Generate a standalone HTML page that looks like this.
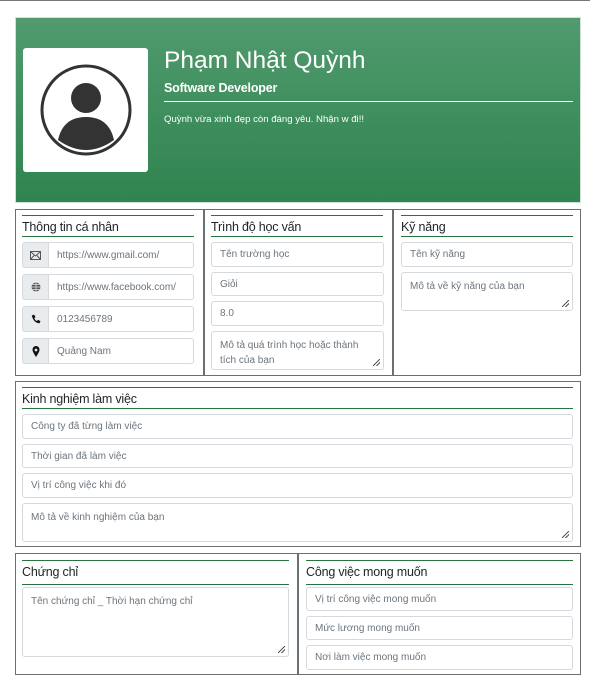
<!DOCTYPE html>
<html><head><meta charset="utf-8">
<style>
*{box-sizing:border-box;margin:0;padding:0}
body{width:590px;height:690px;background:#fff;position:relative;font-family:"Liberation Sans","DejaVu Sans",sans-serif;overflow:hidden}
.a{position:absolute}
.top{left:0;top:0;width:590px;height:1px;background:#777}
.hdr{left:15px;top:17px;width:566px;height:186px;background:linear-gradient(#519a6e,#2f844f);border:1px solid #cfe3d6}
.av{left:23px;top:48px;width:125px;height:124px;background:#fff;border-radius:3px}
.name{left:164px;top:47px;color:#fff;font-size:24.5px;letter-spacing:0}
.role{left:164px;top:81px;color:#fff;font-size:12.5px;font-weight:bold;letter-spacing:-0.2px}
.hl{left:164px;top:101px;width:409px;height:1px;background:#fff}
.bio{left:164px;top:114px;color:#fff;font-size:9.6px}
.box{border:1px solid #6a6f74}
.gl{height:1px;background:#28733f}
.t{font-size:12.5px;color:#212529;letter-spacing:-0.2px}
.in{border:1px solid #d5d9dd;border-radius:3px;background:#fff;font-size:10px;color:#6c757d;padding:0 8px;display:flex;align-items:center}
.ta{align-items:flex-start;padding-top:6px;line-height:15px}
.ta:after{content:"";position:absolute;right:3px;bottom:3px;width:7px;height:7px;background:linear-gradient(135deg,transparent 45%,#555 45%,#555 55%,transparent 55%,transparent 70%,#555 70%,#555 80%,transparent 80%)}
.ad{border:1px solid #d5d9dd;border-radius:3px 0 0 3px;background:#e9ecef;display:flex;align-items:center;justify-content:center}
.ig{border-radius:0 3px 3px 0;border-left:none}
</style></head><body>
<div class="a top"></div>
<div class="a hdr"></div>
<div class="a av"><svg width="125" height="124" viewBox="0 0 125 124"><circle cx="63" cy="62" r="44" fill="none" stroke="#333" stroke-width="3"/><circle cx="63" cy="50" r="15" fill="#333"/><path d="M35 92 Q40 69 63 69 Q86 69 91 92 Q63 112 35 92Z" fill="#333"/></svg></div>
<div class="a name">Phạm Nhật Quỳnh</div>
<div class="a role">Software Developer</div>
<div class="a hl"></div>
<div class="a bio">Quỳnh vừa xinh đẹp còn đáng yêu. Nhận w đi!!</div>

<div class="a box" style="left:15px;top:209px;width:189px;height:167px"></div>
<div class="a box" style="left:204px;top:209px;width:189px;height:167px"></div>
<div class="a box" style="left:393px;top:209px;width:188px;height:167px"></div>

<div class="a gl" style="left:22px;top:215px;width:172px"></div>
<div class="a t" style="left:22px;top:220px">Thông tin cá nhân</div>
<div class="a gl" style="left:22px;top:236px;width:172px"></div>
<div class="a ad" style="left:22px;top:242px;width:27px;height:26px"><svg width="11" height="9" viewBox="0 0 11 9"><rect x=".5" y=".5" width="10" height="8" fill="none" stroke="#555"/><path d="M.5 .5 5.5 5 10.5 .5M.5 8.5 4 4.5M10.5 8.5 7 4.5" fill="none" stroke="#555"/></svg></div>
<div class="a in ig" style="left:49px;top:242px;width:145px;height:26px">https://www.gmail.com/</div>
<div class="a ad" style="left:22px;top:274px;width:27px;height:26px"><svg width="10" height="10" viewBox="0 0 10 10"><circle cx="5" cy="5" r="4.5" fill="#555"/><path d="M.5 5h9M5 .5v9M1.5 2.5h7M1.5 7.5h7" stroke="#e9ecef" stroke-width=".7"/></svg></div>
<div class="a in ig" style="left:49px;top:274px;width:145px;height:26px">https://www.facebook.com/</div>
<div class="a ad" style="left:22px;top:306px;width:27px;height:26px"><svg width="10" height="10" viewBox="0 0 10 10"><path d="M1 1.5 3 .5 4.5 3 3.3 4.2Q4.5 6.5 6 7L7 5.7 9.5 7.2 8.5 9.3Q3 9 .8 2Z" fill="#111"/></svg></div>
<div class="a in ig" style="left:49px;top:306px;width:145px;height:26px">0123456789</div>
<div class="a ad" style="left:22px;top:338px;width:27px;height:26px"><svg width="8" height="11" viewBox="0 0 8 11"><path d="M4 11 Q0 5 0.5 3.5A3.5 3.5 0 0 1 7.5 3.5Q8 5 4 11Z" fill="#111"/><circle cx="4" cy="4" r="1.4" fill="#e9ecef"/></svg></div>
<div class="a in ig" style="left:49px;top:338px;width:145px;height:26px">Quảng Nam</div>

<div class="a gl" style="left:211px;top:215px;width:172px"></div>
<div class="a t" style="left:211px;top:220px">Trình độ học vấn</div>
<div class="a gl" style="left:211px;top:236px;width:172px"></div>
<div class="a in" style="left:211px;top:242px;width:173px;height:25px">Tên trường học</div>
<div class="a in" style="left:211px;top:272px;width:173px;height:24px">Giỏi</div>
<div class="a in" style="left:211px;top:301px;width:173px;height:25px">8.0</div>
<div class="a in ta" style="left:211px;top:331px;width:173px;height:39px">Mô tả quá trình học hoặc thành tích của bạn</div>

<div class="a gl" style="left:401px;top:215px;width:172px"></div>
<div class="a t" style="left:401px;top:220px">Kỹ năng</div>
<div class="a gl" style="left:401px;top:236px;width:172px"></div>
<div class="a in" style="left:401px;top:242px;width:172px;height:25px">Tên kỹ năng</div>
<div class="a in ta" style="left:401px;top:272px;width:172px;height:39px">Mô tả về kỹ năng của bạn</div>

<div class="a box" style="left:15px;top:381px;width:566px;height:166px"></div>
<div class="a gl" style="left:22px;top:387px;width:551px"></div>
<div class="a t" style="left:22px;top:392px">Kinh nghiệm làm việc</div>
<div class="a gl" style="left:22px;top:408px;width:551px"></div>
<div class="a in" style="left:22px;top:414px;width:551px;height:25px">Công ty đã từng làm việc</div>
<div class="a in" style="left:22px;top:444px;width:551px;height:24px">Thời gian đã làm việc</div>
<div class="a in" style="left:22px;top:473px;width:551px;height:25px">Vị trí công việc khi đó</div>
<div class="a in ta" style="left:22px;top:503px;width:551px;height:39px">Mô tả về kinh nghiệm của bạn</div>

<div class="a box" style="left:15px;top:553px;width:283px;height:122px"></div>
<div class="a box" style="left:298px;top:553px;width:283px;height:122px"></div>
<div class="a gl" style="left:22px;top:560px;width:267px"></div>
<div class="a t" style="left:22px;top:565px">Chứng chỉ</div>
<div class="a gl" style="left:22px;top:584px;width:267px"></div>
<div class="a in ta" style="left:22px;top:587px;width:267px;height:70px">Tên chứng chỉ _ Thời hạn chứng chỉ</div>
<div class="a gl" style="left:306px;top:560px;width:267px"></div>
<div class="a t" style="left:306px;top:565px">Công việc mong muốn</div>
<div class="a gl" style="left:306px;top:584px;width:267px"></div>
<div class="a in" style="left:306px;top:587px;width:267px;height:24px">Vị trí công việc mong muốn</div>
<div class="a in" style="left:306px;top:616px;width:267px;height:24px">Mức lương mong muốn</div>
<div class="a in" style="left:306px;top:645px;width:267px;height:25px">Nơi làm việc mong muốn</div>
</body></html>
